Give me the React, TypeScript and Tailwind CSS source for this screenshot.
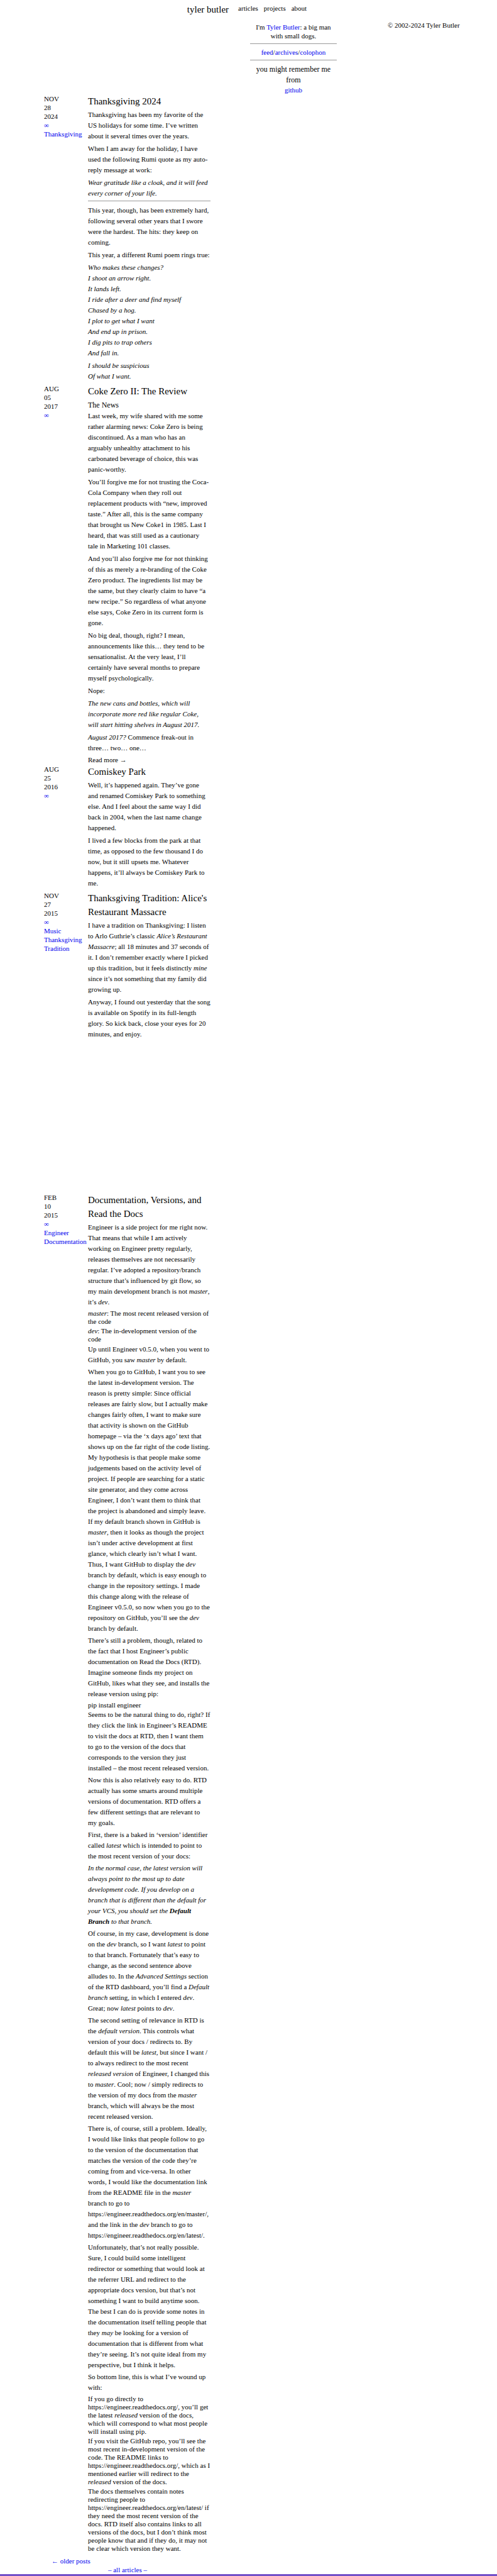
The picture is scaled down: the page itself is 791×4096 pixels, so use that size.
import type { ReactNode } from "react";

const link = "text-[#0000ee]";

function P({ children, dense }: { children: ReactNode; dense?: boolean }) {
  return (
    <p className={dense ? "mb-[2px] leading-[17px]" : "mb-[3px] leading-[17px]"}>
      {children}
    </p>
  );
}

function Rule({ className }: { className: string }) {
  return <hr className={"border-t border-[#9a9a9a] " + className} />;
}

function List({ items }: { items: ReactNode[] }) {
  return (
    <ul className="flex flex-col gap-[2px] py-[1px] leading-[13px]">
      {items.map((item, i) => (
        <li key={i}>{item}</li>
      ))}
    </ul>
  );
}

function Article({
  date,
  tags = [],
  title,
  children,
}: {
  date: [string, string, string];
  tags?: string[];
  title: string;
  children: ReactNode;
}) {
  return (
    <article className="flex pb-px pl-[70px]">
      <div className="w-[70px] shrink-0 leading-[14px]">
        <time>
          {date.map((part) => (
            <span key={part} className="block">
              {part}
            </span>
          ))}
        </time>
        <a href="#permalink" aria-label="Permalink" className={"block " + link}>
          ∞
        </a>
        {tags.map((tag) => (
          <a key={tag} href="#tag" className={"block " + link}>
            {tag}
          </a>
        ))}
      </div>
      <div className="w-full max-w-[195px]">
        <h2 className="mb-[2px] text-[15px] leading-[22px]">{title}</h2>
        {children}
      </div>
    </article>
  );
}

export default function App() {
  return (
    <div className="bg-white font-['Liberation_Serif',serif] text-[11px] text-black">
      <header className="flex h-[36px] justify-center gap-[15px] pt-[6px] pr-[5px]">
        <a href="#home" className="text-[15px] leading-[18px]">
          tyler butler
        </a>
        <nav className="flex gap-[9px] leading-[14px]">
          <a href="#articles">articles</a>
          <a href="#projects">projects</a>
          <a href="#about">about</a>
        </nav>
      </header>

      <div className="flex pl-[398px]">
        <aside className="w-[138px] text-center leading-[14px]">
          <p className="px-[6px]">
            I'm{" "}
            <a href="#me" className={link}>
              Tyler Butler
            </a>
            : a big man with small dogs.
          </p>
          <Rule className="mt-[5px] mb-[6px]" />
          <p>
            <a href="#feed" className={link}>feed</a>/
            <a href="#archives" className={link}>archives</a>/
            <a href="#colophon" className={link}>colophon</a>
          </p>
          <Rule className="mt-[5px] mb-[6px]" />
          <h3 className="px-[6px] text-[12px] leading-[17px]">you might remember me from</h3>
          <a href="#github" className={link}>
            github
          </a>
        </aside>
        <p className="ml-[81px] leading-[14px] -mt-[3px]">© 2002-2024 Tyler Butler</p>
      </div>

      <main>
        <Article date={["NOV", "28", "2024"]} tags={["Thanksgiving"]} title="Thanksgiving 2024">
          <P>
            Thanksgiving has been my favorite of the US holidays for some time. I’ve written about
            it several times over the years.
          </P>
          <P>
            When I am away for the holiday, I have used the following Rumi quote as my auto-reply
            message at work:
          </P>
          <P>
            <em>Wear gratitude like a cloak, and it will feed every corner of your life.</em>
          </P>
          <Rule className="mt-[3px] mb-[6px]" />
          <P>
            This year, though, has been extremely hard, following several other years that I swore
            were the hardest. The hits: they keep on coming.
          </P>
          <P>This year, a different Rumi poem rings true:</P>
          <P>
            <em>
              Who makes these changes?
              <br />I shoot an arrow right.
              <br />
              It lands left.
              <br />I ride after a deer and find myself
              <br />
              Chased by a hog.
              <br />I plot to get what I want
              <br />
              And end up in prison.
              <br />I dig pits to trap others
              <br />
              And fall in.
            </em>
          </P>
          <P>
            <em>
              I should be suspicious
              <br />
              Of what I want.
            </em>
          </P>
        </Article>

        <Article date={["AUG", "05", "2017"]} title="Coke Zero II: The Review">
          <h3 className="text-[12px] leading-[18px]">The News</h3>
          <P>
            Last week, my wife shared with me some rather alarming news: Coke Zero is being
            discontinued. As a man who has an arguably unhealthy attachment to his carbonated
            beverage of choice, this was panic-worthy.
          </P>
          <P>
            You’ll forgive me for not trusting the Coca-Cola Company when they roll out replacement
            products with “new, improved taste.” After all, this is the same company that brought us
            New Coke1 in 1985. Last I heard, that was still used as a cautionary tale in Marketing
            101 classes.
          </P>
          <P>
            And you’ll also forgive me for not thinking of this as merely a re-branding of the Coke
            Zero product. The ingredients list may be the same, but they clearly claim to have “a
            new recipe.” So regardless of what anyone else says, Coke Zero in its current form is
            gone.
          </P>
          <P>
            No big deal, though, right? I mean, announcements like this… they tend to be
            sensationalist. At the very least, I’ll certainly have several months to prepare myself
            psychologically.
          </P>
          <P>Nope:</P>
          <P>
            <em>
              The new cans and bottles, which will incorporate more red like regular Coke, will
              start hitting shelves in August 2017.
            </em>
          </P>
          <P>
            <em>August 2017?</em> Commence freak-out in three… two… one…
          </P>
          <a href="#more" className="block leading-[14px]">
            Read more →
          </a>
        </Article>

        <Article date={["AUG", "25", "2016"]} title="Comiskey Park">
          <P>
            Well, it’s happened again. They’ve gone and renamed Comiskey Park to something else. And
            I feel about the same way I did back in 2004, when the last name change happened.
          </P>
          <P>
            I lived a few blocks from the park at that time, as opposed to the few thousand I do
            now, but it still upsets me. Whatever happens, it’ll always be Comiskey Park to me.
          </P>
        </Article>

        <Article
          date={["NOV", "27", "2015"]}
          tags={["Music", "Thanksgiving", "Tradition"]}
          title="Thanksgiving Tradition: Alice's Restaurant Massacre"
        >
          <P>
            I have a tradition on Thanksgiving: I listen to Arlo Guthrie’s classic{" "}
            <em>Alice’s Restaurant Massacre</em>; all 18 minutes and 37 seconds of it. I don’t
            remember exactly where I picked up this tradition, but it feels distinctly <em>mine</em>{" "}
            since it’s not something that my family did growing up.
          </P>
          <P>
            Anyway, I found out yesterday that the song is available on Spotify in its full-length
            glory. So kick back, close your eyes for 20 minutes, and enjoy.
          </P>
          <div className="h-[240px]" />
        </Article>

        <Article
          date={["FEB", "10", "2015"]}
          tags={["Engineer", "Documentation"]}
          title="Documentation, Versions, and Read the Docs"
        >
          <P dense>
            Engineer is a side project for me right now. That means that while I am actively working
            on Engineer pretty regularly, releases themselves are not necessarily regular. I’ve
            adopted a repository/branch structure that’s influenced by git flow, so my main
            development branch is not <em>master</em>, it’s <em>dev</em>.
          </P>
          <List
            items={[
              <>
                <em>master</em>: The most recent released version of the code
              </>,
              <>
                <em>dev</em>: The in-development version of the code
              </>,
            ]}
          />
          <P dense>
            Up until Engineer v0.5.0, when you went to GitHub, you saw <em>master</em> by default.
          </P>
          <P dense>
            When you go to GitHub, I want you to see the latest in-development version. The reason
            is pretty simple: Since official releases are fairly slow, but I actually make changes
            fairly often, I want to make sure that activity is shown on the GitHub homepage – via
            the ‘x days ago’ text that shows up on the far right of the code listing. My hypothesis
            is that people make some judgements based on the activity level of project. If people
            are searching for a static site generator, and they come across Engineer, I don’t want
            them to think that the project is abandoned and simply leave. If my default branch shown
            in GitHub is <em>master</em>, then it looks as though the project isn’t under active
            development at first glance, which clearly isn’t what I want. Thus, I want GitHub to
            display the <em>dev</em> branch by default, which is easy enough to change in the
            repository settings. I made this change along with the release of Engineer v0.5.0, so
            now when you go to the repository on GitHub, you’ll see the <em>dev</em> branch by
            default.
          </P>
          <P dense>
            There’s still a problem, though, related to the fact that I host Engineer’s public
            documentation on Read the Docs (RTD). Imagine someone finds my project on GitHub, likes
            what they see, and installs the release version using pip:
          </P>
          <div className="leading-[14px]">pip install engineer</div>
          <P dense>
            Seems to be the natural thing to do, right? If they click the link in Engineer’s README
            to visit the docs at RTD, then I want them to go to the version of the docs that
            corresponds to the version they just installed – the most recent released version.
          </P>
          <P dense>
            Now this is also relatively easy to do. RTD actually has some smarts around multiple
            versions of documentation. RTD offers a few different settings that are relevant to
            my&nbsp;goals.
          </P>
          <P dense>
            First, there is a baked in ‘version’ identifier called <em>latest</em> which is intended
            to point to the most recent version of your docs:
          </P>
          <P dense>
            <em>
              In the normal case, the latest version will always point to the most up to date
              development code. If you develop on a branch that is different than the default for
              your VCS, you should set the <strong className="font-bold">Default Branch</strong> to
              that branch.
            </em>
          </P>
          <P dense>
            Of course, in my case, development is done on the <em>dev</em> branch, so I want{" "}
            <em>latest</em> to point to that branch. Fortunately that’s easy to change, as the
            second sentence above alludes to. In the <em>Advanced Settings</em> section of the RTD
            dashboard, you’ll find a <em>Default branch</em> setting, in which I entered{" "}
            <em>dev</em>. Great; now <em>latest</em> points to <em>dev</em>.
          </P>
          <P dense>
            The second setting of relevance in RTD is the <em>default version</em>. This controls
            what version of your docs / redirects to. By default this will be <em>latest</em>, but
            since I want / to always redirect to the most recent <em>released version</em> of
            Engineer, I changed this to <em>master</em>. Cool; now / simply redirects to the version
            of my docs from the <em>master</em> branch, which will always be the most recent
            released version.
          </P>
          <P dense>
            There is, of course, still a problem. Ideally, I would like links that people follow to
            go to the version of the documentation that matches the version of the code they’re
            coming from and vice-versa. In other words, I would like the documentation link from the
            README file in the <em>master</em> branch to go to
            https://engineer.readthedocs.org/en/master/, and the link in the <em>dev</em> branch to
            go to https://engineer.readthedocs.org/en/latest/.
          </P>
          <P dense>
            Unfortunately, that’s not really possible. Sure, I could build some intelligent
            redirector or something that would look at the referrer URL and redirect to the
            appropriate docs version, but that’s not something I want to build anytime soon. The
            best I can do is provide some notes in the documentation itself telling people that they{" "}
            <em>may</em> be looking for a version of documentation that is different from what
            they’re seeing. It’s not quite ideal from my perspective, but I think it helps.
          </P>
          <P dense>So bottom line, this is what I’ve wound up with:</P>
          <List
            items={[
              <>
                If you go directly to https://engineer.readthedocs.org/, you’ll get the latest{" "}
                <em>released</em> version of the docs, which will correspond to what most people
                will install using pip.
              </>,
              <>
                If you visit the GitHub repo, you’ll see the most recent in-development version of
                the code. The README links to https://engineer.readthedocs.org/, which as I
                mentioned earlier will redirect to the <em>released</em> version of the docs.
              </>,
              <>
                The docs themselves contain notes redirecting people to
                https://engineer.readthedocs.org/en/latest/ if they need the most recent version of
                the docs. RTD itself also contains links to all versions of the docs, but I don’t
                think most people know that and if they do, it may not be clear which version they
                want.
              </>,
            ]}
          />
        </Article>

        <nav className="ml-[70px] mt-[4px] flex w-full max-w-[266px] flex-col leading-[14px]">
          <a href="#older" className={"pl-[12px] " + link}>
            ← older posts
          </a>
          <a href="#all" className={"text-center " + link}>
            – all articles –
          </a>
        </nav>
      </main>
      <div className="h-[3px] bg-[#7250c8]" />
    </div>
  );
}
